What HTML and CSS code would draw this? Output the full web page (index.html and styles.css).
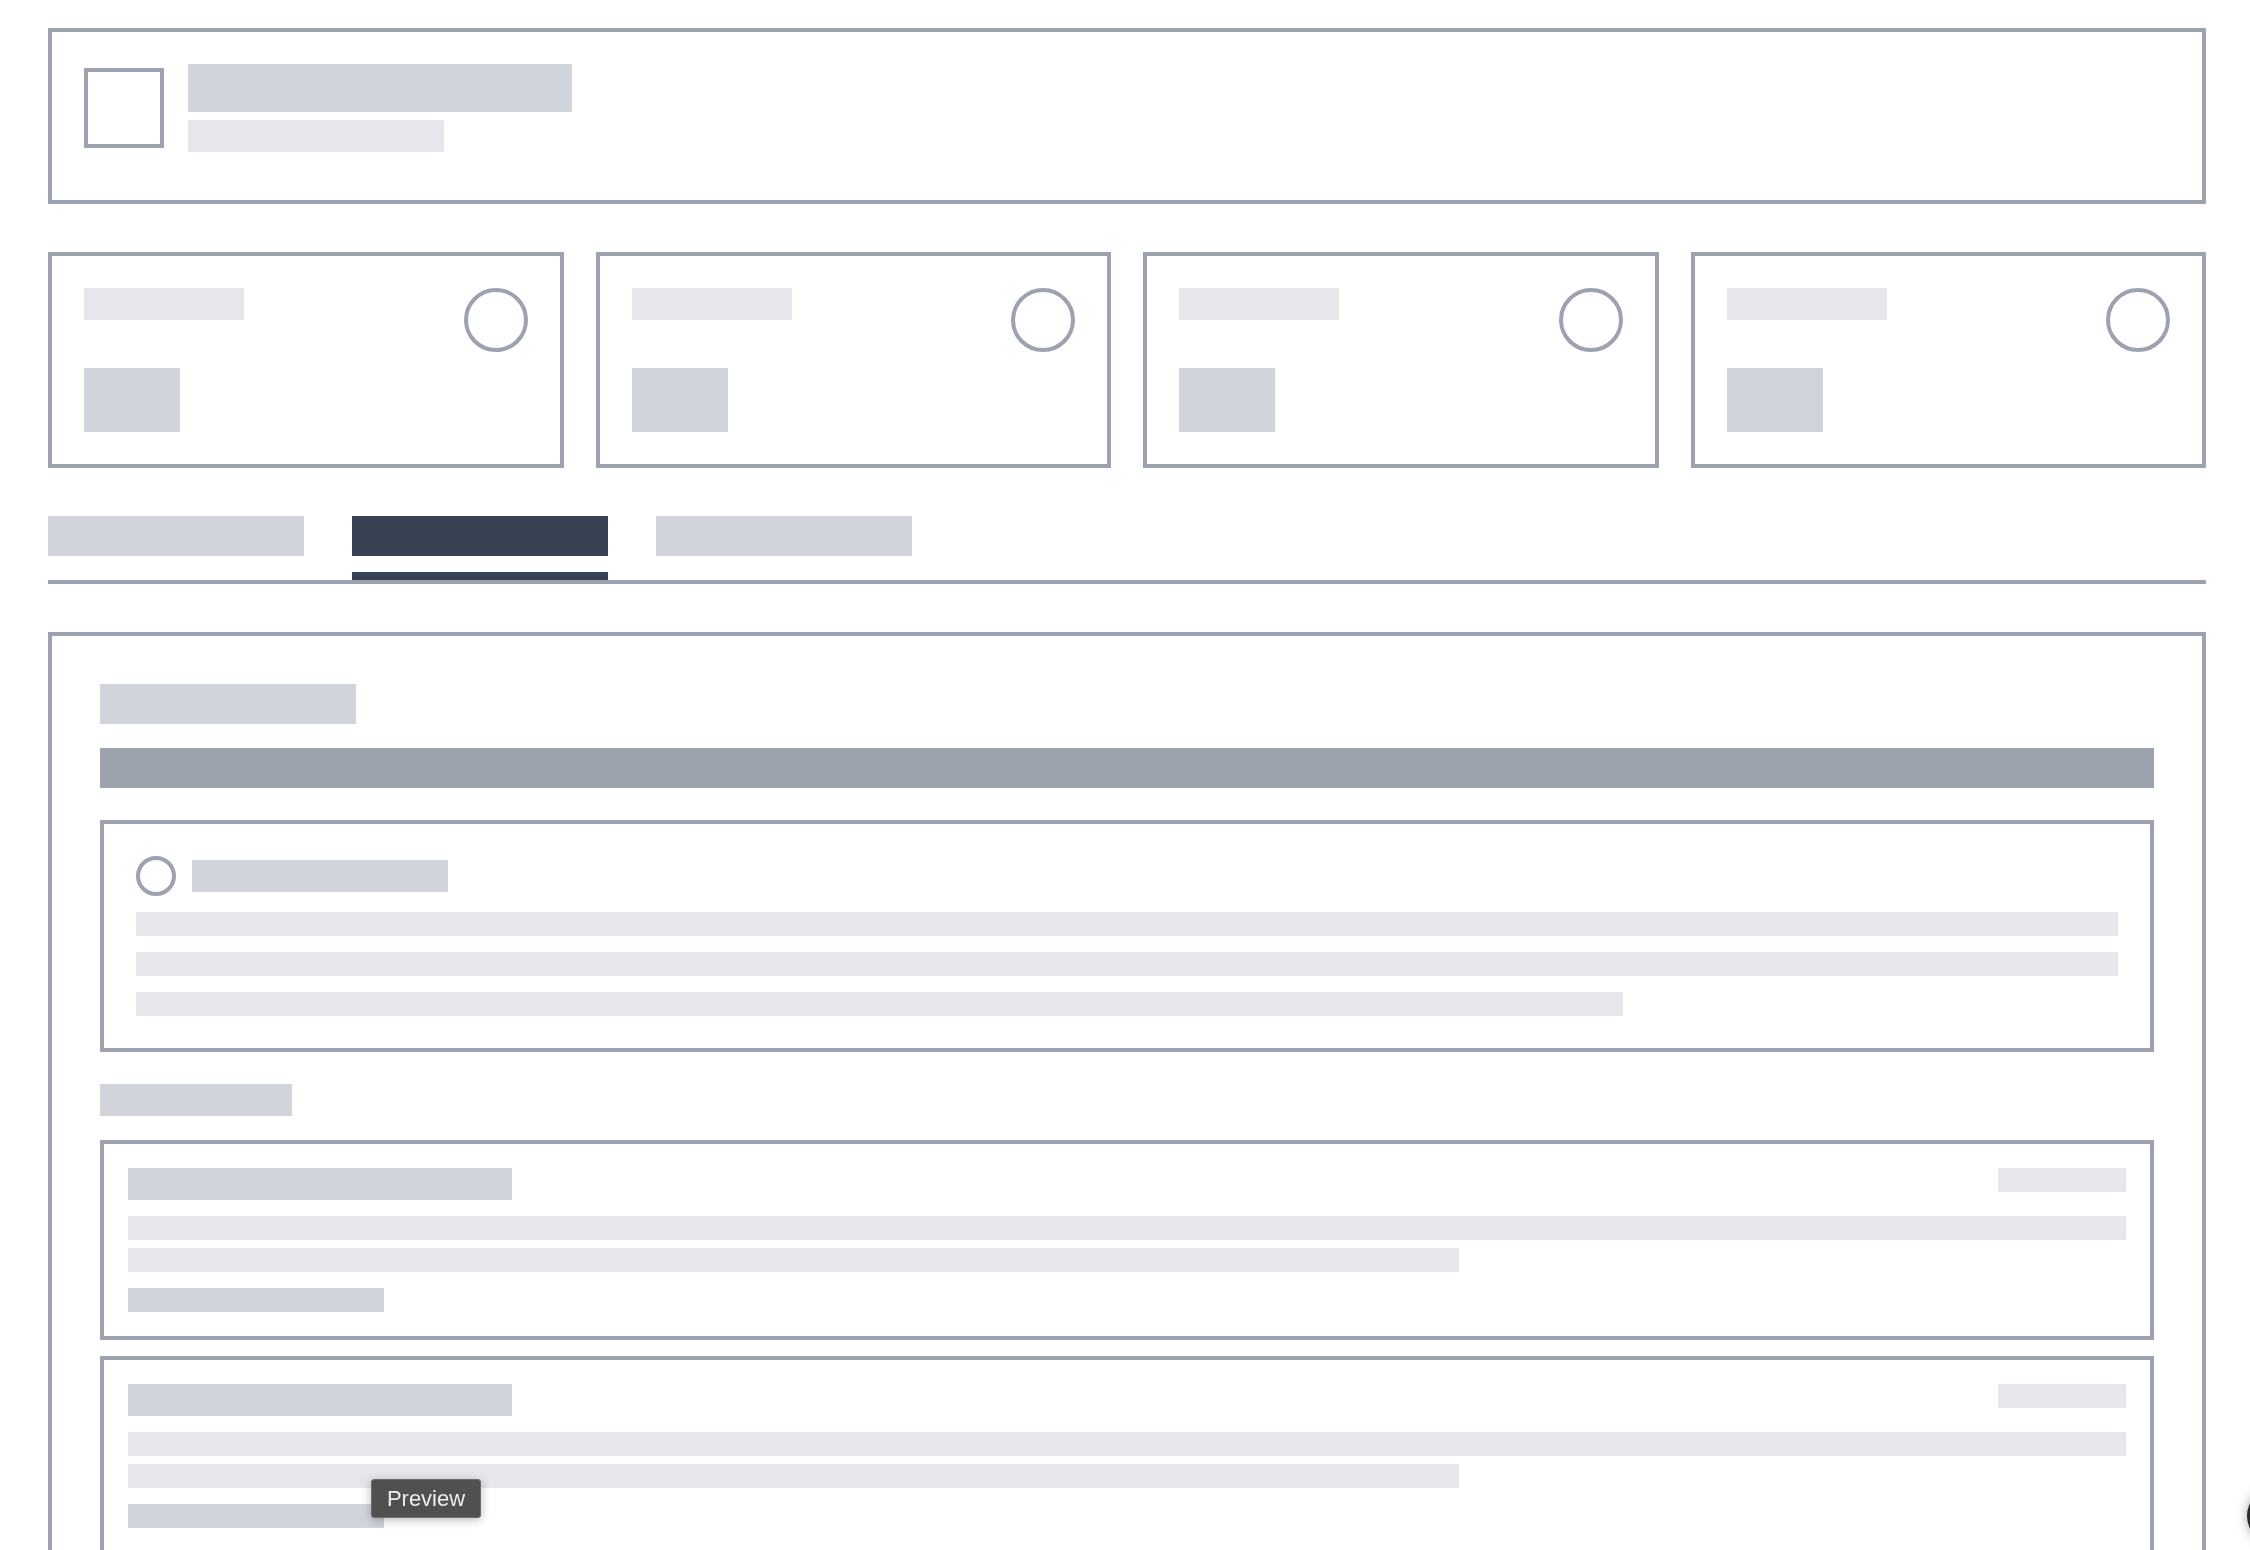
FILE: index.html
```html
<!DOCTYPE html>
<html lang="en">
<head>
<meta charset="utf-8">
<title>Dashboard skeleton</title>
<link rel="stylesheet" href="styles.css">
</head>
<body>
<div class="page">
  <header class="hdr">
    <div class="logo"></div>
    <div class="hdr-text">
      <div class="sk sk-300 hdr-title"></div>
      <div class="sk sk-200 hdr-sub"></div>
    </div>
  </header>

  <section class="stats">
    <div class="stat">
      <div class="stat-main">
        <div class="sk sk-200 stat-label"></div>
        <div class="sk sk-300 stat-value"></div>
      </div>
      <div class="ring"></div>
    </div>
    <div class="stat">
      <div class="stat-main">
        <div class="sk sk-200 stat-label"></div>
        <div class="sk sk-300 stat-value"></div>
      </div>
      <div class="ring"></div>
    </div>
    <div class="stat">
      <div class="stat-main">
        <div class="sk sk-200 stat-label"></div>
        <div class="sk sk-300 stat-value"></div>
      </div>
      <div class="ring"></div>
    </div>
    <div class="stat">
      <div class="stat-main">
        <div class="sk sk-200 stat-label"></div>
        <div class="sk sk-300 stat-value"></div>
      </div>
      <div class="ring"></div>
    </div>
  </section>

  <nav class="tabs">
    <div class="tab"><div class="tab-bar"></div><div class="tab-ind"></div></div>
    <div class="tab active"><div class="tab-bar"></div><div class="tab-ind"></div></div>
    <div class="tab"><div class="tab-bar"></div><div class="tab-ind"></div></div>
  </nav>

  <main class="content">
    <div class="sk sk-300 sec-title"></div>
    <div class="banner"></div>

    <div class="box">
      <div class="box-head">
        <div class="dot"></div>
        <div class="sk sk-300 box-title"></div>
      </div>
      <div class="box-lines">
        <div class="sk sk-200 line"></div>
        <div class="sk sk-200 line"></div>
        <div class="sk sk-200 line line-75"></div>
      </div>
    </div>

    <div class="sk sk-300 sec-title2"></div>

    <div class="list">
      <div class="item">
        <div class="item-head">
          <div class="sk sk-300 item-title"></div>
          <div class="sk sk-200 item-meta"></div>
        </div>
        <div class="item-lines">
          <div class="sk sk-200 iline"></div>
          <div class="sk sk-200 iline iline-66"></div>
        </div>
        <div class="sk sk-300 item-foot"></div>
      </div>
      <div class="item">
        <div class="item-head">
          <div class="sk sk-300 item-title"></div>
          <div class="sk sk-200 item-meta"></div>
        </div>
        <div class="item-lines">
          <div class="sk sk-200 iline"></div>
          <div class="sk sk-200 iline iline-66"></div>
        </div>
        <div class="sk sk-300 item-foot"></div>
      </div>
      <div class="item">
        <div class="item-head">
          <div class="sk sk-300 item-title"></div>
          <div class="sk sk-200 item-meta"></div>
        </div>
        <div class="item-lines">
          <div class="sk sk-200 iline"></div>
          <div class="sk sk-200 iline iline-66"></div>
        </div>
        <div class="sk sk-300 item-foot"></div>
      </div>
    </div>
  </main>
</div>

<div class="fade"></div>
<div class="float-btn"></div>
<div class="tooltip">Preview</div>
</body>
</html>
```

FILE: styles.css
```css
html, body {
  margin: 0;
  padding: 0;
  background: #ffffff;
  overflow: hidden;
  height: 100%;
}

body {
  font-family: "Liberation Sans", Arial, sans-serif;
}

.page {
  width: 2158px;
  margin-left: 48px;
  padding-top: 28px;
  display: flex;
  flex-direction: column;
  gap: 48px;
}

.sk { flex: none; }
.sk-200 { background: #e5e7eb; }
.sk-300 { background: #d1d5db; }

/* Header */
.hdr {
  border: 4px solid #9ca3af;
  padding: 32px 32px 48px 32px;
  display: flex;
  align-items: center;
  gap: 24px;
}
.logo {
  width: 80px;
  height: 80px;
  box-sizing: border-box;
  border: 4px solid #9ca3af;
}
.hdr-text {
  display: flex;
  flex-direction: column;
  gap: 8px;
}
.hdr-title { width: 384px; height: 48px; }
.hdr-sub { width: 256px; height: 32px; }

/* Stats */
.stats {
  display: grid;
  grid-template-columns: repeat(4, 1fr);
  gap: 32px;
}
.stat {
  border: 4px solid #9ca3af;
  padding: 32px;
  display: flex;
  justify-content: space-between;
  align-items: flex-start;
}
.stat-main {
  display: flex;
  flex-direction: column;
  gap: 48px;
}
.stat-label { width: 160px; height: 32px; }
.stat-value { width: 96px; height: 64px; }
.ring {
  width: 64px;
  height: 64px;
  box-sizing: border-box;
  border: 4px solid #9ca3af;
  border-radius: 50%;
}

/* Tabs */
.tabs {
  display: flex;
  gap: 48px;
  border-bottom: 4px solid #9ca3af;
}
.tab {
  display: flex;
  flex-direction: column;
  width: 256px;
}
.tab-bar {
  height: 40px;
  background: #d1d5db;
  margin-bottom: 16px;
}
.tab-ind {
  height: 8px;
  background: transparent;
}
.tab.active .tab-bar,
.tab.active .tab-ind {
  background: #374151;
}

/* Content */
.content {
  border: 4px solid #9ca3af;
  border-bottom: none;
  padding: 48px 48px 200px;
  display: flex;
  flex-direction: column;
}
.sec-title { width: 256px; height: 40px; margin-bottom: 24px; }
.banner { height: 40px; background: #9ca3af; margin-bottom: 32px; }

.box {
  border: 4px solid #9ca3af;
  padding: 32px;
}
.box-head {
  display: flex;
  align-items: center;
  gap: 16px;
}
.dot {
  width: 40px;
  height: 40px;
  box-sizing: border-box;
  border: 4px solid #9ca3af;
  border-radius: 50%;
}
.box-title { width: 256px; height: 32px; }
.box-lines {
  margin-top: 16px;
  display: flex;
  flex-direction: column;
  gap: 16px;
}
.line { height: 24px; }
.line-75 { width: 75%; }

.sec-title2 { width: 192px; height: 32px; margin-top: 32px; margin-bottom: 24px; }

.list {
  display: flex;
  flex-direction: column;
  gap: 16px;
}
.item {
  border: 4px solid #9ca3af;
  padding: 24px;
}
.item-head {
  display: flex;
  justify-content: space-between;
  align-items: flex-start;
}
.item-title { width: 384px; height: 32px; }
.item-meta { width: 128px; height: 24px; }
.item-lines {
  margin-top: 16px;
  display: flex;
  flex-direction: column;
  gap: 8px;
}
.iline { height: 24px; }
.iline-66 { width: 66.6%; }
.item-foot { width: 256px; height: 24px; margin-top: 16px; }

/* Overlays */
.fade {
  position: fixed;
  z-index: -1;
  left: 0;
  right: 0;
  bottom: 0;
  height: 72px;
  background: linear-gradient(to bottom, rgba(240,240,240,0), rgba(240,240,240,1));
  pointer-events: none;
}
.float-btn {
  position: fixed;
  left: 2247px;
  top: 1488px;
  width: 56px;
  height: 56px;
  border-radius: 50%;
  background: #2b2b2b;
  box-shadow: 0 0 12px rgba(0,0,0,0.35);
}
.tooltip {
  position: fixed;
  left: 371px;
  top: 1479px;
  width: 110px;
  height: 39px;
  box-sizing: border-box;
  background: #505050;
  border: 1px solid #6e6e6e;
  border-radius: 3px;
  color: #ececec;
  font-size: 22px;
  line-height: 37px;
  text-align: center;
  box-shadow: 0 2px 10px rgba(0,0,0,0.28);
}
```
